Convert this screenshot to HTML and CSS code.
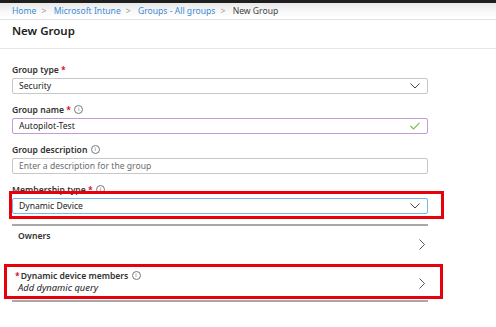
FILE: index.html
```html
<!DOCTYPE html>
<html lang="en">
<head>
    <meta charset="UTF-8">
    <meta name="viewport" content="width=device-width, initial-scale=1.0">
    <title>New Group</title>
    <link rel="stylesheet" href="styles.css">
</head>
<body>
    <div class="topbar"></div>
    <div class="breadcrumb">
        <a href="#">Home</a><span class="sep">&gt;</span>
        <a href="#">Microsoft Intune</a><span class="sep">&gt;</span>
        <a href="#">Groups - All groups</a><span class="sep">&gt;</span>
        <span class="current">New Group</span>
    </div>
    <h1 class="title">New Group</h1>

    <div class="form">
        <div class="field">
            <label>Group type <span class="req">*</span></label>
            <div class="input select">
                <span>Security</span>
                <svg width="10" height="6" viewBox="0 0 10 6"><path d="M0.5 0.5 L5 5 L9.5 0.5" fill="none" stroke="#444" stroke-width="1"/></svg>
            </div>
        </div>
        <div class="field">
            <label>Group name <span class="req">*</span> <span class="info">i</span></label>
            <div class="input valid">
                <span>Autopilot-Test</span>
                <svg width="10" height="8" viewBox="0 0 10 8"><path d="M0.5 4 L3.5 7 L9.5 0.8" fill="none" stroke="#7cc04b" stroke-width="1.2"/></svg>
            </div>
        </div>
        <div class="field">
            <label>Group description <span class="info">i</span></label>
            <div class="input">
                <span class="placeholder">Enter a description for the group</span>
            </div>
        </div>
        <div class="field">
            <label>Membership type <span class="req">*</span> <span class="info">i</span></label>
            <div class="input select focused">
                <span>Dynamic Device</span>
                <svg width="10" height="6" viewBox="0 0 10 6"><path d="M0.5 0.5 L5 5 L9.5 0.5" fill="none" stroke="#444" stroke-width="1"/></svg>
            </div>
        </div>

        <div class="rows">
            <div class="row owners">
                <span class="row-label">Owners</span>
                <svg class="chevron" width="6" height="11" viewBox="0 0 6 11"><path d="M0.5 0.5 L5.5 5.5 L0.5 10.5" fill="none" stroke="#555" stroke-width="1"/></svg>
            </div>
            <div class="row members">
                <div class="row-text">
                    <span class="row-label"><span class="req">*</span>Dynamic device members <span class="info">i</span></span>
                    <span class="query">Add dynamic query</span>
                </div>
                <svg class="chevron" width="6" height="11" viewBox="0 0 6 11"><path d="M0.5 0.5 L5.5 5.5 L0.5 10.5" fill="none" stroke="#555" stroke-width="1"/></svg>
            </div>
        </div>
    </div>

    <!-- red annotation boxes drawn over the screenshot -->
    <div class="mark mark-type"></div>
    <div class="mark mark-members"></div>
</body>
</html>
```

FILE: styles.css
```css
body {
    margin: 0;
    width: 496px;
    height: 327px;
    overflow: hidden;
    background: #fff;
    font-family: "Noto Sans", "Open Sans", sans-serif;
    color: #333;
    position: relative;
}
.topbar {
    height: 3px;
    background: #1e1e1e;
}
.breadcrumb {
    height: 17px;
    box-sizing: border-box;
    padding: 2px 0 0 12px;
    background: linear-gradient(#e9e9e9, #fafafa 60%, #fff);
    border-bottom: 1px solid #e2e2e2;
    font-size: 8.6px;
    line-height: 13px;
    white-space: nowrap;
}
.breadcrumb a {
    color: #3c8bd6;
    text-decoration: none;
}
.breadcrumb .sep {
    color: #999;
    margin: 0 5px;
}
.breadcrumb .current {
    color: #444;
}
.title {
    margin: 0;
    height: 29px;
    box-sizing: border-box;
    padding: 3px 0 0 12px;
    font-size: 11.5px;
    line-height: 16px;
    font-weight: 600;
    color: #222;
    border-bottom: 1px solid #e6e6e6;
}
.form {
    width: 416px;
    padding: 15px 0 0 12px;
}
.field {
    margin-bottom: 10px;
}
.field label {
    display: block;
    height: 12px;
    margin-bottom: 2px;
    font-size: 8.6px;
    line-height: 12px;
    font-weight: 600;
    color: #333;
}
.req {
    color: #d0021b;
}
.info {
    display: inline-block;
    width: 7px;
    height: 7px;
    border: 1px solid #777;
    border-radius: 50%;
    font-size: 5.5px;
    line-height: 7px;
    text-align: center;
    color: #666;
    font-weight: 400;
    vertical-align: middle;
    margin: -2px 0 0 1px;
}
.input {
    display: flex;
    align-items: center;
    justify-content: space-between;
    height: 16px;
    box-sizing: border-box;
    padding: 0 7px 0 6px;
    border: 1px solid #c8c8c8;
    border-radius: 2px;
    font-size: 8.6px;
    color: #222;
}
.input.valid {
    border-color: #c39bd8;
}
.input.focused {
    border-color: #74b7ea;
}
.placeholder {
    color: #6b6b6b;
}
.rows {
    margin-top: 8px;
}
.row {
    display: flex;
    justify-content: space-between;
    border-top: 2px solid #a8a8a8;
    box-sizing: border-box;
}
.row-label {
    font-size: 8.6px;
    font-weight: 600;
    color: #333;
}
.owners {
    height: 40px;
    padding: 4px 3px 0 6px;
}
.owners .chevron {
    margin-top: 9px;
}
.members {
    height: 38px;
    padding: 4px 3px 0 3px;
    border-bottom: 2px solid #a8a8a8;
}
.members .row-label .req {
    margin-right: 1px;
}
.row-text {
    display: flex;
    flex-direction: column;
}
.query {
    font-size: 9.4px;
    font-style: italic;
    color: #222;
    margin: -1px 0 0 3px;
}
.members .chevron {
    margin-top: 8px;
}
.mark {
    position: absolute;
    border: 3px solid #e8000b;
    box-sizing: border-box;
}
.mark-type {
    left: 9px;
    top: 191px;
    width: 435px;
    height: 28px;
}
.mark-members {
    left: 4px;
    top: 264px;
    width: 439px;
    height: 35px;
}
```
